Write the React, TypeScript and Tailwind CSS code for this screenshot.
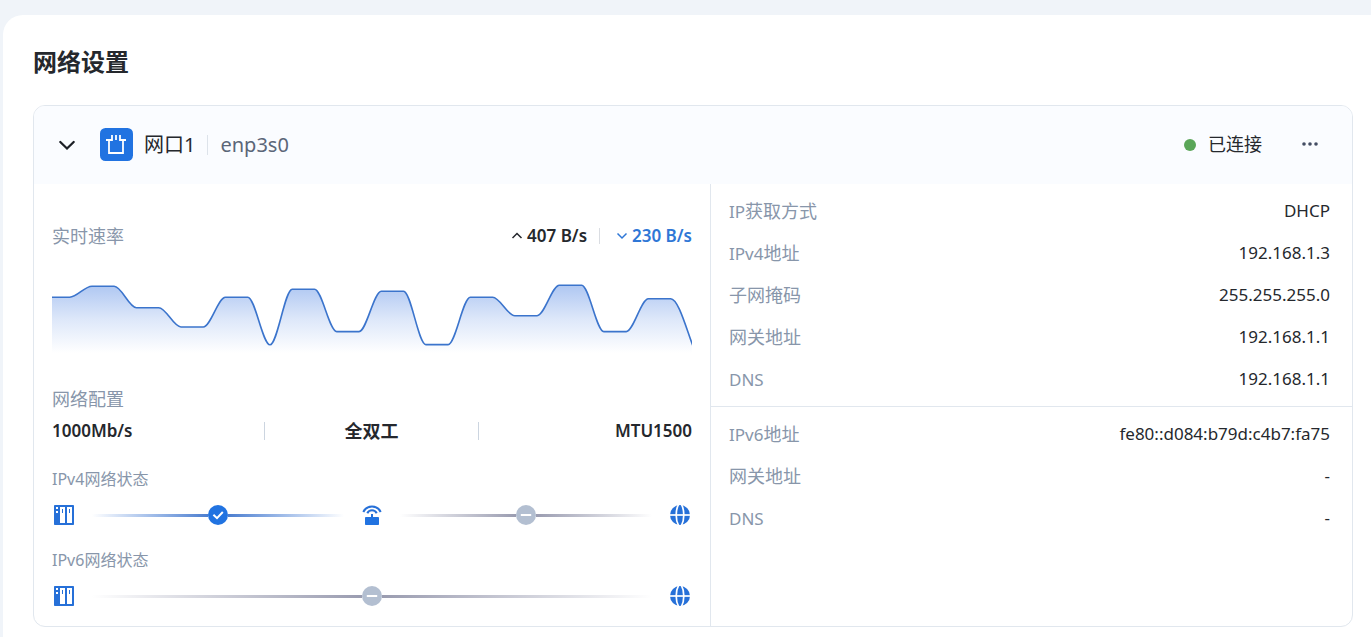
import React, { useState } from 'react';

type Field = { latin?: string; label?: string; value: string };

const ipv4Fields: Field[] = [
  { latin: 'IP', label: '获取方式', value: 'DHCP' },
  { latin: 'IPv4', label: '地址', value: '192.168.1.3' },
  { label: '子网掩码', value: '255.255.255.0' },
  { label: '网关地址', value: '192.168.1.1' },
  { latin: 'DNS', value: '192.168.1.1' },
];

const ipv6Fields: Field[] = [
  { latin: 'IPv6', label: '地址', value: 'fe80::d084:b79d:c4b7:fa75' },
  { label: '网关地址', value: '-' },
  { latin: 'DNS', value: '-' },
];

// Height of each sample inside the 75px tall chart, measured from the top
const samples = [
  17.2, 17.2, 6.2, 6.2, 27.7, 27.7, 47, 47, 17.2, 17.2, 64.8, 9.2, 9.2, 51.6, 51.6, 11.2, 11.2, 64.6, 64.6,
  17.2, 17.2, 35.7, 35.7, 5.2, 5.2, 51.6, 51.6, 18.7, 18.7, 66,
];
const STEP = 22.26;
const OFFSET = -4.6;

function buildLine() {
  let d = `M${OFFSET} ${samples[0]}`;
  for (let i = 1; i < samples.length; i++) {
    const x0 = OFFSET + (i - 1) * STEP;
    const x1 = OFFSET + i * STEP;
    const last = i === samples.length - 1;
    const y1 = samples[i];
    const cy = last ? y1 - 20 : y1;
    d += ` C${x0 + STEP / 3} ${samples[i - 1]} ${x1 - STEP / 3} ${cy} ${x1} ${y1}`;
  }
  return d;
}

function RateChart() {
  const line = buildLine();
  return (
    <svg className="mt-8 block h-[75px] w-full" viewBox="0 0 640 75" preserveAspectRatio="none" aria-hidden="true">
      <defs>
        <linearGradient id="rate-fill" gradientUnits="userSpaceOnUse" x1="0" y1="5" x2="0" y2="73">
          <stop offset="0" stopColor="#2b6bdc" stopOpacity="0.38" />
          <stop offset="0.5" stopColor="#2b6bdc" stopOpacity="0.16" />
          <stop offset="1" stopColor="#2b6bdc" stopOpacity="0" />
        </linearGradient>
      </defs>
      <path d={`${line} V75 H${OFFSET} Z`} fill="url(#rate-fill)" />
      <path d={line} fill="none" stroke="#3b74cc" strokeWidth="1.6" />
    </svg>
  );
}

function PortIcon() {
  return (
    <svg className="h-[33px] w-[33px] shrink-0" viewBox="0 0 33 33" aria-hidden="true">
      <rect width="33" height="33" rx="5.5" fill="#2173e1" />
      <g fill="none" stroke="#fff" strokeWidth="1.8">
        <path d="M6 12H12V7" />
        <path d="M26 12H20V7" />
        <path d="M16 7V12" />
        <path d="M9 12V25H23V12" />
      </g>
    </svg>
  );
}

function ServerIcon() {
  return (
    <svg className="h-6 w-6 shrink-0" viewBox="-2 -2 24 24" aria-hidden="true">
      <rect width="20" height="20" rx="0.8" fill="#2670d8" />
      <path d="M2 2h2v2H2zM2 6h2v2H2zM6 2h5v16H6zM13 2h5v16h-5z" fill="#fff" />
      <path d="M8 4h1v4H8zM15 4h1v4h-1z" fill="#2670d8" />
    </svg>
  );
}

function RouterIcon() {
  return (
    <svg className="h-6 w-6 shrink-0" viewBox="-2 -2 24 24" aria-hidden="true">
      <g fill="none" stroke="#2670d8" strokeWidth="2">
        <path d="M1.3 7A9.6 9.6 0 0 1 18.7 7" />
        <path d="M5.3 8.2A5.2 5.2 0 0 1 14.7 8.2" />
        <path d="M10 9V13" />
      </g>
      <rect x="3" y="12" width="14" height="8" rx="0.8" fill="#2173e1" />
    </svg>
  );
}

function GlobeIcon() {
  return (
    <svg className="h-6 w-6 shrink-0" viewBox="-12 -12 24 24" aria-hidden="true">
      <circle r="10" fill="#2670d8" />
      <g fill="none" stroke="#fff" strokeWidth="1.7">
        <path d="M-11 0H11" />
        <path d="M-1.4 -10.6C-4.6 -5 -4.6 5 -1.4 10.6" />
        <path d="M1.4 -10.6C4.6 -5 4.6 5 1.4 10.6" />
      </g>
    </svg>
  );
}

function LinkLine({ ok = false }: { ok?: boolean }) {
  return (
    <div className="flex h-6 flex-1 items-center">
      <div className={`h-[3px] flex-1 bg-linear-to-r ${ok ? 'from-white to-[#4c7ecf]' : 'from-white to-[#9a9cb0]'}`} />
      <svg className="h-5 w-5 shrink-0" viewBox="0 0 20 20" aria-hidden="true">
        <circle cx="10" cy="10" r="10" fill={ok ? '#2173e1' : '#b3bfd1'} />
        <path d={ok ? 'M5.4 9.8L9 13.2L14.8 7' : 'M4.8 10H15.2'} fill="none" stroke="#fff" strokeWidth="2" />
      </svg>
      <div className={`h-[3px] flex-1 bg-linear-to-l ${ok ? 'from-white to-[#4c7ecf]' : 'from-white to-[#9a9cb0]'}`} />
    </div>
  );
}

function FieldList({ fields }: { fields: Field[] }) {
  return (
    <dl className="py-[6px] pr-[22px] pl-[18px]">
      {fields.map((field) => (
        <div key={`${field.latin}${field.label}`} className="flex h-[42px] items-center justify-between">
          <dt className="text-[18px] text-[#8896aa]">
            <span className="text-[17px]">{field.latin}</span>
            {field.label}
          </dt>
          <dd className="text-[17px]">{field.value}</dd>
        </div>
      ))}
    </dl>
  );
}

export default function App() {
  const [open, setOpen] = useState(true);

  return (
    <div className="flex min-h-screen flex-col bg-[#f0f4f9] pt-[15px] pl-[3px] font-['Noto_Sans','Noto_Sans_CJK_SC',sans-serif] text-[#25282d]">
      <main className="flex-1 rounded-tl-[20px] bg-white pt-7 pr-[18px] pb-[10px] pl-[30px]">
        <h1 className="text-2xl leading-[38px] font-bold">网络设置</h1>

        <section className="mt-6 overflow-hidden rounded-xl border border-[#e1e7ee]">
          {/* Interface header */}
          <header className="flex h-[78px] items-center bg-[#fafcff] pr-8 pb-px pl-5">
            <button type="button" aria-label="展开" aria-expanded={open} onClick={() => setOpen(!open)} className="mr-5 h-[26px] w-[26px]">
              <svg viewBox="0 0 26 26" fill="none" stroke="#1c2026" strokeWidth="2.3" strokeLinecap="round" aria-hidden="true">
                <path d="M6.3 10L13 16.5L19.7 10" />
              </svg>
            </button>
            <PortIcon />
            <span className="ml-[11px] text-xl">网口1</span>
            <span className="mx-3 h-5 w-px bg-[#dde3ea]" />
            <span className="text-xl text-[#5b6678]">enp3s0</span>
            <span className="ml-auto h-3 w-3 rounded-full bg-[#5aa658]" />
            <span className="ml-3 text-[18px]">已连接</span>
            <button type="button" aria-label="更多" className="ml-[38px] h-5 w-5">
              <svg viewBox="0 0 20 20" fill="#434d63" aria-hidden="true">
                <circle cx="4" cy="9" r="1.8" />
                <circle cx="10" cy="9" r="1.8" />
                <circle cx="16" cy="9" r="1.8" />
              </svg>
            </button>
          </header>

          {open && (
            <div className="grid grid-cols-[677fr_641fr]">
              {/* Rate and link status */}
              <div className="border-r border-[#e1e7ee] px-[18px] pt-10 pb-[18px]">
                <div className="flex h-6 items-center text-[17px] font-semibold">
                  <h2 className="mr-auto text-[18px] font-normal text-[#8896aa]">实时速率</h2>
                  <svg className="mr-1 h-3 w-3" viewBox="0 0 12 12" fill="none" stroke="#25282d" strokeWidth="1.5" aria-hidden="true">
                    <path d="M1.5 8L6 3.5L10.5 8" />
                  </svg>
                  <span>407 B/s</span>
                  <span className="mr-4 ml-3 h-4 w-px bg-[#dadde2]" />
                  <svg className="mr-1 h-3 w-3" viewBox="0 0 12 12" fill="none" stroke="#2f77d6" strokeWidth="1.5" aria-hidden="true">
                    <path d="M1.5 3.5L6 8L10.5 3.5" />
                  </svg>
                  <span className="text-[#2f77d6]">230 B/s</span>
                </div>

                <RateChart />

                <h2 className="mt-8 text-[18px] leading-6 text-[#8896aa]">网络配置</h2>
                <div className="mt-2 grid h-6 grid-cols-3 items-center text-[17px] leading-[18px] font-semibold">
                  <span className="border-r border-[#ccd5e0]">1000Mb/s</span>
                  <span className="border-r border-[#ccd5e0] text-center text-[18px] font-bold">全双工</span>
                  <span className="text-right">MTU1500</span>
                </div>

                <h3 className="mt-6 text-base leading-6 text-[#8896aa]">IPv4网络状态</h3>
                <div className="mt-3 flex items-center gap-4">
                  <ServerIcon />
                  <LinkLine ok />
                  <RouterIcon />
                  <LinkLine />
                  <GlobeIcon />
                </div>

                <h3 className="mt-[21px] text-base leading-6 text-[#8896aa]">IPv6网络状态</h3>
                <div className="mt-3 flex items-center gap-4">
                  <ServerIcon />
                  <LinkLine />
                  <GlobeIcon />
                </div>
              </div>

              {/* Address details */}
              <div>
                <FieldList fields={ipv4Fields} />
                <div className="border-t border-[#e1e7ee]">
                  <FieldList fields={ipv6Fields} />
                </div>
              </div>
            </div>
          )}
        </section>
      </main>
    </div>
  );
}
